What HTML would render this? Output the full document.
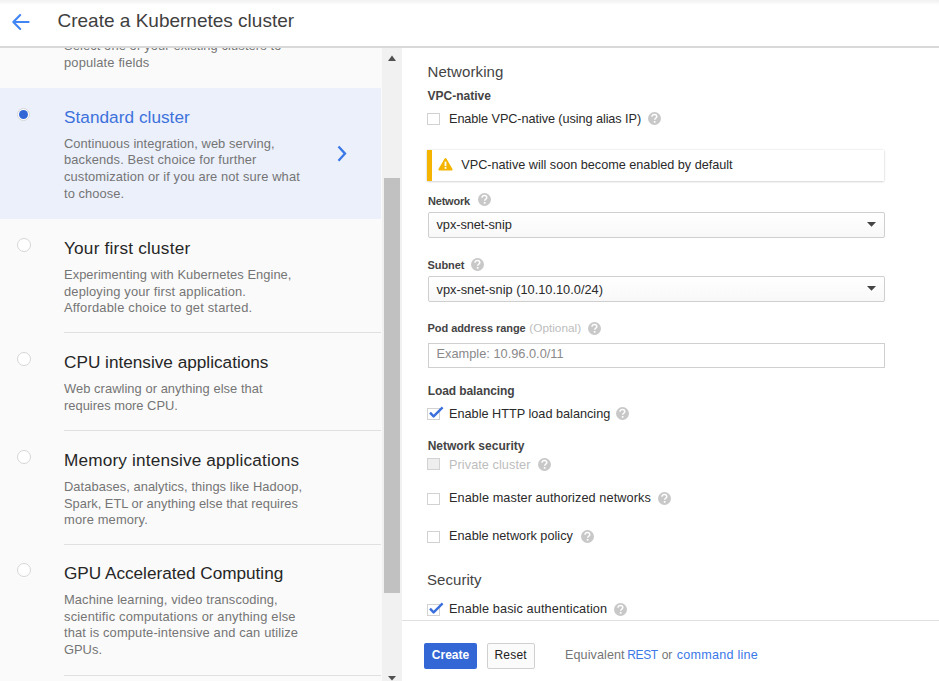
<!DOCTYPE html>
<html><head><meta charset="utf-8"><title>Create a Kubernetes cluster</title>
<style>
html,body{margin:0;padding:0;width:939px;height:681px;overflow:hidden;background:#fff;}
body{position:relative;font-family:"Liberation Sans",sans-serif;}
.t{position:absolute;white-space:nowrap;}
.b{position:absolute;}
</style></head><body>
<div class="b" style="left:0px;top:48px;width:382px;height:633px;background:#fafafa;"></div>
<div class="t" style="left:64px;top:40px;font-size:12.9px;line-height:12.9px;color:#757575;letter-spacing:0.1px;">Select one of your existing clusters to</div>
<div class="t" style="left:64px;top:57px;font-size:12.9px;line-height:12.9px;color:#757575;letter-spacing:0.15px;">populate fields</div>
<div class="b" style="left:0px;top:88px;width:381px;height:131px;background:#ebf0fb;"></div>
<div class="b" style="left:17px;top:107.5px;width:13px;height:13px;box-sizing:border-box;border-radius:50%;background:#fff;border:1px solid #d6d6d6;"></div>
<div class="b" style="left:19px;top:109.5px;width:9px;height:9px;border-radius:50%;background:#3367d6;"></div>
<div class="t" style="left:64px;top:109px;font-size:17.2px;line-height:17.2px;color:#3d72dc;letter-spacing:0.04px;">Standard cluster</div>
<div class="t" style="left:64px;top:138px;font-size:12.9px;line-height:12.9px;color:#757575;letter-spacing:0.057px;">Continuous integration, web serving,</div>
<div class="t" style="left:64px;top:154px;font-size:12.9px;line-height:12.9px;color:#757575;letter-spacing:0.122px;">backends. Best choice for further</div>
<div class="t" style="left:64px;top:171px;font-size:12.9px;line-height:12.9px;color:#757575;letter-spacing:0.108px;">customization or if you are not sure what</div>
<div class="t" style="left:64px;top:188px;font-size:12.9px;line-height:12.9px;color:#757575;letter-spacing:0.056px;">to choose.</div>
<div class="b" style="left:16.8px;top:237.7px;width:14.4px;height:14.4px;box-sizing:border-box;border-radius:50%;background:#fff;border:1px solid #d6d6d6;"></div>
<div class="t" style="left:64px;top:240px;font-size:17.2px;line-height:17.2px;color:#262626;letter-spacing:0.21px;">Your first cluster</div>
<div class="t" style="left:64px;top:269px;font-size:12.9px;line-height:12.9px;color:#757575;letter-spacing:0.047px;">Experimenting with Kubernetes Engine,</div>
<div class="t" style="left:64px;top:286px;font-size:12.9px;line-height:12.9px;color:#757575;letter-spacing:0.153px;">deploying your first application.</div>
<div class="t" style="left:64px;top:302px;font-size:12.9px;line-height:12.9px;color:#757575;letter-spacing:0.197px;">Affordable choice to get started.</div>
<div class="b" style="left:16.8px;top:351.7px;width:14.4px;height:14.4px;box-sizing:border-box;border-radius:50%;background:#fff;border:1px solid #d6d6d6;"></div>
<div class="t" style="left:64px;top:354px;font-size:17.2px;line-height:17.2px;color:#262626;">CPU intensive applications</div>
<div class="t" style="left:64px;top:383px;font-size:12.9px;line-height:12.9px;color:#757575;letter-spacing:0.055px;">Web crawling or anything else that</div>
<div class="t" style="left:64px;top:400px;font-size:12.9px;line-height:12.9px;color:#757575;">requires more CPU.</div>
<div class="b" style="left:16.8px;top:449.7px;width:14.4px;height:14.4px;box-sizing:border-box;border-radius:50%;background:#fff;border:1px solid #d6d6d6;"></div>
<div class="t" style="left:64px;top:452px;font-size:17.2px;line-height:17.2px;color:#262626;letter-spacing:0.17px;">Memory intensive applications</div>
<div class="t" style="left:64px;top:481px;font-size:12.9px;line-height:12.9px;color:#757575;letter-spacing:0.058px;">Databases, analytics, things like Hadoop,</div>
<div class="t" style="left:64px;top:498px;font-size:12.9px;line-height:12.9px;color:#757575;">Spark, ETL or anything else that requires</div>
<div class="t" style="left:64px;top:514px;font-size:12.9px;line-height:12.9px;color:#757575;letter-spacing:0.15px;">more memory.</div>
<div class="b" style="left:16.8px;top:563.1px;width:14.4px;height:14.4px;box-sizing:border-box;border-radius:50%;background:#fff;border:1px solid #d6d6d6;"></div>
<div class="t" style="left:64px;top:565px;font-size:17.2px;line-height:17.2px;color:#262626;letter-spacing:-0.02px;">GPU Accelerated Computing</div>
<div class="t" style="left:64px;top:594px;font-size:12.9px;line-height:12.9px;color:#757575;letter-spacing:0.103px;">Machine learning, video transcoding,</div>
<div class="t" style="left:64px;top:611px;font-size:12.9px;line-height:12.9px;color:#757575;letter-spacing:0.185px;">scientific computations or anything else</div>
<div class="t" style="left:64px;top:627px;font-size:12.9px;line-height:12.9px;color:#757575;letter-spacing:0.133px;">that is compute-intensive and can utilize</div>
<div class="t" style="left:64px;top:644px;font-size:12.9px;line-height:12.9px;color:#757575;">GPUs.</div>
<div class="b" style="left:64px;top:332px;width:317px;height:1px;background:#e0e0e0;"></div>
<div class="b" style="left:64px;top:430px;width:317px;height:1px;background:#e0e0e0;"></div>
<div class="b" style="left:64px;top:544px;width:317px;height:1px;background:#e0e0e0;"></div>
<div class="b" style="left:64px;top:675px;width:317px;height:1px;background:#e0e0e0;"></div>
<svg class="b" style="left:336px;top:145px" width="12" height="18" viewBox="0 0 12 18"><path d="M2.5 1.5 L9 8.6 L2.5 15.7" fill="none" stroke="#3b78e7" stroke-width="2.3"/></svg>
<div class="b" style="left:382px;top:48px;width:20px;height:633px;background:#f1f1f1;"></div>
<div class="b" style="left:384px;top:178px;width:16px;height:414.6px;background:#c1c1c1;"></div>
<svg class="b" style="left:386px;top:54px" width="12" height="9" viewBox="0 0 12 9"><path d="M2 7 L6 1.6 L10 7 Z" fill="#505050"/></svg>
<svg class="b" style="left:386px;top:674px" width="12" height="9" viewBox="0 0 12 9"><path d="M2 2 L10 2 L6 6.5 Z" fill="#505050"/></svg>
<div class="t" style="left:427.5px;top:64px;font-size:15px;line-height:15px;color:#444444;letter-spacing:0.09px;">Networking</div>
<div class="t" style="left:427.5px;top:90px;font-size:12px;line-height:12px;color:#444444;font-weight:700;">VPC-native</div>
<div class="b" style="left:427px;top:113px;width:12.8px;height:12.2px;box-sizing:border-box;border:1px solid #d2d2d2;background:#fff;"></div>
<div class="t" style="left:449px;top:113px;font-size:12.7px;line-height:12.7px;color:#2a2a2a;letter-spacing:-0.076px;">Enable VPC-native (using alias IP)</div>
<svg class="b" style="left:648.2px;top:111.7px" width="13" height="13" viewBox="0 0 26 26"><circle cx="13" cy="13" r="13" fill="#c8c8c8"/><path d="M8 9.6 C8 6.6 10.2 4.9 12.7 4.9 C15.3 4.9 17.6 6.6 17.6 9.2 C17.6 12.4 13.3 12.6 13.3 15.6" fill="none" stroke="#fff" stroke-width="3"/><rect x="11.6" y="18" width="3.4" height="3.4" fill="#fff"/></svg>
<div class="b" style="left:427px;top:149.5px;width:457px;height:31.5px;background:#fff;box-shadow:0 0 2px rgba(0,0,0,0.14),0 1px 2px rgba(0,0,0,0.12);border-left:5px solid #f4b400;box-sizing:border-box;"></div>
<svg class="b" style="left:438px;top:157px" width="15" height="14" viewBox="0 0 15 14"><path d="M7.5 2 L13.6 12.6 L1.4 12.6 Z" fill="#f4b400" stroke="#f4b400" stroke-width="2" stroke-linejoin="round"/><rect x="6.6" y="4.6" width="1.8" height="4.6" fill="#fff"/><rect x="6.6" y="10.1" width="1.8" height="1.7" fill="#fff"/></svg>
<div class="t" style="left:461.3px;top:159px;font-size:12.7px;line-height:12.7px;color:#2a2a2a;letter-spacing:-0.02px;">VPC-native will soon become enabled by default</div>
<div class="t" style="left:428px;top:196px;font-size:11px;line-height:11px;color:#444444;font-weight:700;letter-spacing:-0.2px;">Network</div>
<svg class="b" style="left:478.0px;top:193.39999999999998px" width="13" height="13" viewBox="0 0 26 26"><circle cx="13" cy="13" r="13" fill="#c8c8c8"/><path d="M8 9.6 C8 6.6 10.2 4.9 12.7 4.9 C15.3 4.9 17.6 6.6 17.6 9.2 C17.6 12.4 13.3 12.6 13.3 15.6" fill="none" stroke="#fff" stroke-width="3"/><rect x="11.6" y="18" width="3.4" height="3.4" fill="#fff"/></svg>
<div class="b" style="left:427.5px;top:212px;width:457px;height:26px;box-sizing:border-box;border:1px solid #cfcfcf;border-radius:2px;background:linear-gradient(#ffffff,#f8f8f8);"></div>
<div class="t" style="left:436.5px;top:219px;font-size:12.8px;line-height:12.8px;color:#2a2a2a;letter-spacing:-0.067px;">vpx-snet-snip</div>
<svg class="b" style="left:866px;top:221px" width="11" height="7" viewBox="0 0 11 7"><path d="M1 1 L10 1 L5.5 5.8 Z" fill="#444"/></svg>
<div class="t" style="left:427.5px;top:260px;font-size:11px;line-height:11px;color:#444444;font-weight:700;letter-spacing:-0.08px;">Subnet</div>
<svg class="b" style="left:471.0px;top:258.09999999999997px" width="13" height="13" viewBox="0 0 26 26"><circle cx="13" cy="13" r="13" fill="#c8c8c8"/><path d="M8 9.6 C8 6.6 10.2 4.9 12.7 4.9 C15.3 4.9 17.6 6.6 17.6 9.2 C17.6 12.4 13.3 12.6 13.3 15.6" fill="none" stroke="#fff" stroke-width="3"/><rect x="11.6" y="18" width="3.4" height="3.4" fill="#fff"/></svg>
<div class="b" style="left:427.5px;top:276px;width:457px;height:26px;box-sizing:border-box;border:1px solid #cfcfcf;border-radius:2px;background:linear-gradient(#ffffff,#f8f8f8);"></div>
<div class="t" style="left:436.5px;top:284px;font-size:12.8px;line-height:12.8px;color:#2a2a2a;">vpx-snet-snip (10.10.10.0/24)</div>
<svg class="b" style="left:866px;top:285px" width="11" height="7" viewBox="0 0 11 7"><path d="M1 1 L10 1 L5.5 5.8 Z" fill="#444"/></svg>
<div class="t" style="left:427.5px;top:323px;font-size:11px;line-height:11px;color:#444444;font-weight:700;letter-spacing:-0.05px;">Pod address range</div>
<div class="t" style="left:529.3px;top:323px;font-size:11.8px;line-height:11.8px;color:#bdbdbd;">(Optional)</div>
<svg class="b" style="left:587.7px;top:321.7px" width="13" height="13" viewBox="0 0 26 26"><circle cx="13" cy="13" r="13" fill="#c8c8c8"/><path d="M8 9.6 C8 6.6 10.2 4.9 12.7 4.9 C15.3 4.9 17.6 6.6 17.6 9.2 C17.6 12.4 13.3 12.6 13.3 15.6" fill="none" stroke="#fff" stroke-width="3"/><rect x="11.6" y="18" width="3.4" height="3.4" fill="#fff"/></svg>
<div class="b" style="left:427.5px;top:343px;width:457px;height:24.5px;box-sizing:border-box;border:1px solid #cfcfcf;background:#fff;"></div>
<div class="t" style="left:436.5px;top:348px;font-size:12.8px;line-height:12.8px;color:#8a8a8a;">Example: 10.96.0.0/11</div>
<div class="t" style="left:427.7px;top:385px;font-size:12px;line-height:12px;color:#444444;font-weight:700;letter-spacing:-0.09px;">Load balancing</div>
<div class="b" style="left:427px;top:408px;width:12.8px;height:12.2px;box-sizing:border-box;border:1px solid #d2d2d2;background:#fff;"></div>
<svg class="b" style="left:427px;top:405px" width="17" height="15" viewBox="0 0 17 15"><path d="M3.0 7.6 L6.6 11.4 L15.6 2.4" fill="none" stroke="#3b6fdc" stroke-width="2.4" stroke-linejoin="round"/></svg>
<div class="t" style="left:449px;top:408px;font-size:12.7px;line-height:12.7px;color:#2a2a2a;">Enable HTTP load balancing</div>
<svg class="b" style="left:615.7px;top:407.0px" width="13" height="13" viewBox="0 0 26 26"><circle cx="13" cy="13" r="13" fill="#c8c8c8"/><path d="M8 9.6 C8 6.6 10.2 4.9 12.7 4.9 C15.3 4.9 17.6 6.6 17.6 9.2 C17.6 12.4 13.3 12.6 13.3 15.6" fill="none" stroke="#fff" stroke-width="3"/><rect x="11.6" y="18" width="3.4" height="3.4" fill="#fff"/></svg>
<div class="t" style="left:427.7px;top:440px;font-size:12px;line-height:12px;color:#444444;font-weight:700;">Network security</div>
<div class="b" style="left:427px;top:458px;width:12.8px;height:12.2px;box-sizing:border-box;border:1px solid #d2d2d2;background:#eeeeee;"></div>
<div class="t" style="left:449px;top:459px;font-size:12.7px;line-height:12.7px;color:#bdbdbd;letter-spacing:0.07px;">Private cluster</div>
<svg class="b" style="left:537.7px;top:457.7px" width="13" height="13" viewBox="0 0 26 26"><circle cx="13" cy="13" r="13" fill="#c8c8c8"/><path d="M8 9.6 C8 6.6 10.2 4.9 12.7 4.9 C15.3 4.9 17.6 6.6 17.6 9.2 C17.6 12.4 13.3 12.6 13.3 15.6" fill="none" stroke="#fff" stroke-width="3"/><rect x="11.6" y="18" width="3.4" height="3.4" fill="#fff"/></svg>
<div class="b" style="left:427px;top:493px;width:12.8px;height:12.2px;box-sizing:border-box;border:1px solid #d2d2d2;background:#fff;"></div>
<div class="t" style="left:449px;top:492px;font-size:12.7px;line-height:12.7px;color:#2a2a2a;letter-spacing:0.09px;">Enable master authorized networks</div>
<svg class="b" style="left:657.5px;top:492.2px" width="13" height="13" viewBox="0 0 26 26"><circle cx="13" cy="13" r="13" fill="#c8c8c8"/><path d="M8 9.6 C8 6.6 10.2 4.9 12.7 4.9 C15.3 4.9 17.6 6.6 17.6 9.2 C17.6 12.4 13.3 12.6 13.3 15.6" fill="none" stroke="#fff" stroke-width="3"/><rect x="11.6" y="18" width="3.4" height="3.4" fill="#fff"/></svg>
<div class="b" style="left:427px;top:531px;width:12.8px;height:12.2px;box-sizing:border-box;border:1px solid #d2d2d2;background:#fff;"></div>
<div class="t" style="left:449px;top:530px;font-size:12.7px;line-height:12.7px;color:#2a2a2a;letter-spacing:0.025px;">Enable network policy</div>
<svg class="b" style="left:580.7px;top:530.4000000000001px" width="13" height="13" viewBox="0 0 26 26"><circle cx="13" cy="13" r="13" fill="#c8c8c8"/><path d="M8 9.6 C8 6.6 10.2 4.9 12.7 4.9 C15.3 4.9 17.6 6.6 17.6 9.2 C17.6 12.4 13.3 12.6 13.3 15.6" fill="none" stroke="#fff" stroke-width="3"/><rect x="11.6" y="18" width="3.4" height="3.4" fill="#fff"/></svg>
<div class="t" style="left:427px;top:572px;font-size:15px;line-height:15px;color:#444444;letter-spacing:0.057px;">Security</div>
<div class="b" style="left:427px;top:603.5px;width:12.8px;height:12.2px;box-sizing:border-box;border:1px solid #d2d2d2;background:#fff;"></div>
<svg class="b" style="left:427px;top:600.5px" width="17" height="15" viewBox="0 0 17 15"><path d="M3.0 7.6 L6.6 11.4 L15.6 2.4" fill="none" stroke="#3b6fdc" stroke-width="2.4" stroke-linejoin="round"/></svg>
<div class="t" style="left:449px;top:603px;font-size:12.7px;line-height:12.7px;color:#2a2a2a;letter-spacing:0.11px;">Enable basic authentication</div>
<svg class="b" style="left:613.7px;top:603.2px" width="13" height="13" viewBox="0 0 26 26"><circle cx="13" cy="13" r="13" fill="#c8c8c8"/><path d="M8 9.6 C8 6.6 10.2 4.9 12.7 4.9 C15.3 4.9 17.6 6.6 17.6 9.2 C17.6 12.4 13.3 12.6 13.3 15.6" fill="none" stroke="#fff" stroke-width="3"/><rect x="11.6" y="18" width="3.4" height="3.4" fill="#fff"/></svg>
<div class="b" style="left:402px;top:620px;width:537px;height:61px;background:#fff;"></div>
<div class="b" style="left:402px;top:620px;width:537px;height:1px;background:#e0e0e0;"></div>
<div class="b" style="left:424px;top:643px;width:53px;height:26px;background:#3367d6;border-radius:2px;"></div>
<div class="t" style="left:431.8px;top:649px;font-size:12px;line-height:12px;color:#fff;font-weight:700;">Create</div>
<div class="b" style="left:487.3px;top:643px;width:47.5px;height:26px;box-sizing:border-box;border:1px solid #d0d0d0;border-radius:2px;background:#fbfbfb;"></div>
<div class="t" style="left:494.5px;top:649px;font-size:12px;line-height:12px;color:#212121;letter-spacing:0.2px;">Reset</div>
<div class="t" style="left:565px;top:649px;font-size:12.6px;line-height:12.6px;color:#757575;letter-spacing:0.09px;">Equivalent</div>
<div class="t" style="left:627.3px;top:649px;font-size:12px;line-height:12px;color:#3b78e7;letter-spacing:-0.37px;">REST</div>
<div class="t" style="left:661.8px;top:649px;font-size:12px;line-height:12px;color:#757575;letter-spacing:-0.3px;">or</div>
<div class="t" style="left:676.8px;top:649px;font-size:12.6px;line-height:12.6px;color:#3b78e7;letter-spacing:0.227px;">command line</div>
<div class="b" style="left:0px;top:0px;width:939px;height:46px;background:#fff;"></div>
<div class="b" style="left:0px;top:0px;width:939px;height:5px;background:linear-gradient(#f1f1f1,#f6f6f6 40%,#fcfcfc 80%,#fff);"></div>
<div class="b" style="left:0px;top:46px;width:939px;height:2px;background:#d9d9d9;"></div>
<svg class="b" style="left:11px;top:13px" width="20" height="18" viewBox="0 0 20 18"><path d="M17.6 9 L2.5 9 M9.2 2 L2.3 9 L9.2 16" fill="none" stroke="#4285f4" stroke-width="2.1" stroke-linecap="round" stroke-linejoin="round"/></svg>
<div class="t" style="left:57.5px;top:11px;font-size:19px;line-height:19px;color:#404040;">Create a Kubernetes cluster</div>
</body></html>
